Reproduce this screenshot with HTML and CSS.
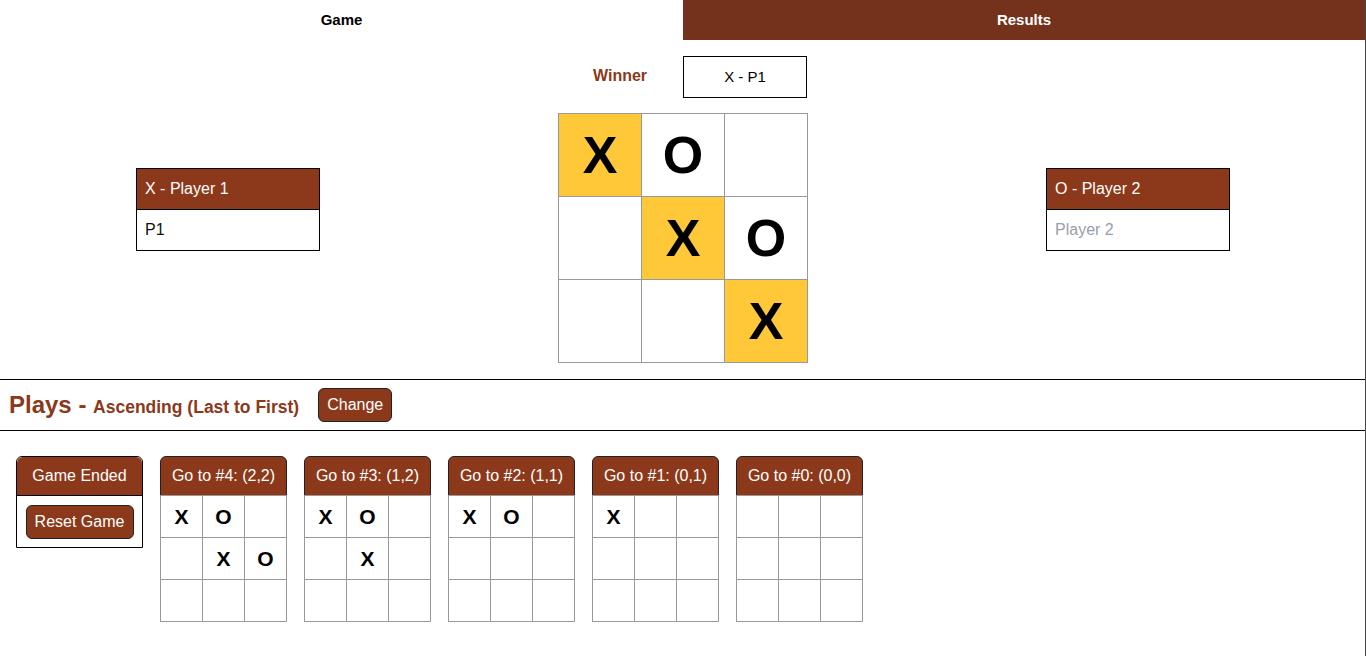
FILE: index.html
```html
<!DOCTYPE html>
<html>
<head>
<meta charset="utf-8">
<link rel="stylesheet" href="styles.css">
</head>
<body>
<div class="page">
  <div class="tabs">
    <div class="tab active">Game</div>
    <div class="tab">Results</div>
  </div>
  <section class="game">
    <div class="player-card">
      <div class="player-head">X - Player 1</div>
      <div class="player-name">P1</div>
    </div>
    <div class="center">
      <div class="winner-row">
        <div class="winner-label">Winner</div>
        <div class="winner-box">X - P1</div>
      </div>
      <table class="board">
        <tr><td class="win">X</td><td>O</td><td></td></tr>
        <tr><td></td><td class="win">X</td><td>O</td></tr>
        <tr><td></td><td></td><td class="win">X</td></tr>
      </table>
    </div>
    <div class="player-card">
      <div class="player-head">O - Player 2</div>
      <div class="player-name placeholder">Player 2</div>
    </div>
  </section>
  <div class="plays-bar">
    <h2 class="plays-title">Plays - <span class="plays-sub">Ascending (Last to First)</span></h2>
    <button class="btn">Change</button>
  </div>
  <section class="history">
    <div class="hcard ended">
      <div class="hhead">Game Ended</div>
      <div class="hbody"><button class="btn">Reset Game</button></div>
    </div>
    <div class="hcard">
      <div class="hhead">Go to #4: (2,2)</div>
      <table class="mini">
        <tr><td>X</td><td>O</td><td></td></tr>
        <tr><td></td><td>X</td><td>O</td></tr>
        <tr><td></td><td></td><td></td></tr>
      </table>
    </div>
    <div class="hcard">
      <div class="hhead">Go to #3: (1,2)</div>
      <table class="mini">
        <tr><td>X</td><td>O</td><td></td></tr>
        <tr><td></td><td>X</td><td></td></tr>
        <tr><td></td><td></td><td></td></tr>
      </table>
    </div>
    <div class="hcard">
      <div class="hhead">Go to #2: (1,1)</div>
      <table class="mini">
        <tr><td>X</td><td>O</td><td></td></tr>
        <tr><td></td><td></td><td></td></tr>
        <tr><td></td><td></td><td></td></tr>
      </table>
    </div>
    <div class="hcard">
      <div class="hhead">Go to #1: (0,1)</div>
      <table class="mini">
        <tr><td>X</td><td></td><td></td></tr>
        <tr><td></td><td></td><td></td></tr>
        <tr><td></td><td></td><td></td></tr>
      </table>
    </div>
    <div class="hcard">
      <div class="hhead">Go to #0: (0,0)</div>
      <table class="mini">
        <tr><td></td><td></td><td></td></tr>
        <tr><td></td><td></td><td></td></tr>
        <tr><td></td><td></td><td></td></tr>
      </table>
    </div>
  </section>
</div>
</body>
</html>
```

FILE: styles.css
```css
* { box-sizing: border-box; }
html, body { margin: 0; padding: 0; background: #fff; }
body {
  font-family: "Liberation Sans", Arial, sans-serif;
  color: #000;
}
.page {
  width: 1366px;
  height: 656px;
  border-right: 1px solid #444;
  overflow: hidden;
}
.tabs {
  display: flex;
  height: 40px;
}
.tab {
  flex: 1;
  display: flex;
  align-items: center;
  justify-content: center;
  font-weight: bold;
  font-size: 15px;
  padding-bottom: 2px;
  color: #fff;
  background: #74311b;
}
.tab.active {
  background: #fff;
  color: #000;
  flex: 0 0 683px;
}
.game {
  display: flex;
  justify-content: space-between;
  align-items: flex-start;
  padding: 16px 135px 16px 136px;
  border-bottom: 1px solid #000;
  height: 340px;
}
.player-card {
  width: 184px;
  margin-top: 112px;
  border: 1px solid #000;
}
.player-head {
  background: #8b391a;
  color: #fff;
  font-size: 16px;
  height: 41px;
  line-height: 40px;
  padding-left: 8px;
  border-bottom: 1px solid #000;
}
.player-name {
  height: 40px;
  line-height: 39px;
  padding-left: 8px;
  font-size: 16px;
  color: #111;
}
.player-name.placeholder { color: #9aa0ab; }
.center {
  display: flex;
  flex-direction: column;
  align-items: center;
  gap: 15px;
}
.winner-row {
  display: flex;
  width: 250px;
  align-items: center;
}
.winner-label {
  flex: 0 0 125px;
  padding-left: 35px;
  padding-bottom: 3px;
  color: #8b391a;
  font-weight: bold;
  font-size: 16px;
}
.winner-box {
  width: 124px;
  height: 42px;
  border: 1px solid #000;
  display: flex;
  align-items: center;
  justify-content: center;
  font-size: 15px;
  padding-bottom: 2px;
}
.board {
  border-collapse: collapse;
}
.board td {
  width: 83px;
  height: 83px;
  border: 1px solid #999;
  text-align: center;
  vertical-align: middle;
  font-weight: bold;
  font-size: 52px;
  padding: 0;
  line-height: 1;
}
.board td.win { background: #fec838; }
.plays-bar {
  display: flex;
  align-items: center;
  height: 51px;
  padding-left: 9px;
  border-bottom: 1px solid #000;
}
.plays-title {
  margin: 0;
  color: #8b391a;
  font-size: 24px;
  font-weight: bold;
}
.plays-sub {
  font-size: 17.5px;
}
.btn {
  font-family: "Liberation Sans", Arial, sans-serif;
  background: #8b391a;
  color: #fff;
  font-size: 16px;
  border: 1px solid #222;
  border-radius: 6px;
  height: 34px;
  padding: 0 8px;
  cursor: pointer;
}
.plays-bar .btn { margin-left: 19px; }
.history {
  display: flex;
  align-items: flex-start;
  gap: 17px;
  padding: 25px 16px;
}
.hcard {
  width: 127px;
}
.hhead {
  background: #8b391a;
  color: #fff;
  font-size: 16px;
  height: 40px;
  display: flex;
  align-items: center;
  justify-content: center;
  border: 1px solid #222;
  border-radius: 6px 6px 0 0;
}
.ended {
  border: 1px solid #000;
  border-radius: 6px 6px 0 0;
}
.ended .hhead {
  border: none;
  border-bottom: 1px solid #000;
  height: 39px;
}
.hbody {
  padding: 9px 8px 8px 8px;
  display: flex;
  justify-content: center;
}
.hbody .btn { width: 108px; padding: 0; }
.mini {
  border-collapse: collapse;
  margin-top: -1px;
}
.mini td {
  width: 42px;
  height: 42px;
  border: 1px solid #999;
  text-align: center;
  vertical-align: middle;
  font-weight: bold;
  font-size: 21px;
  padding: 0;
}
```
